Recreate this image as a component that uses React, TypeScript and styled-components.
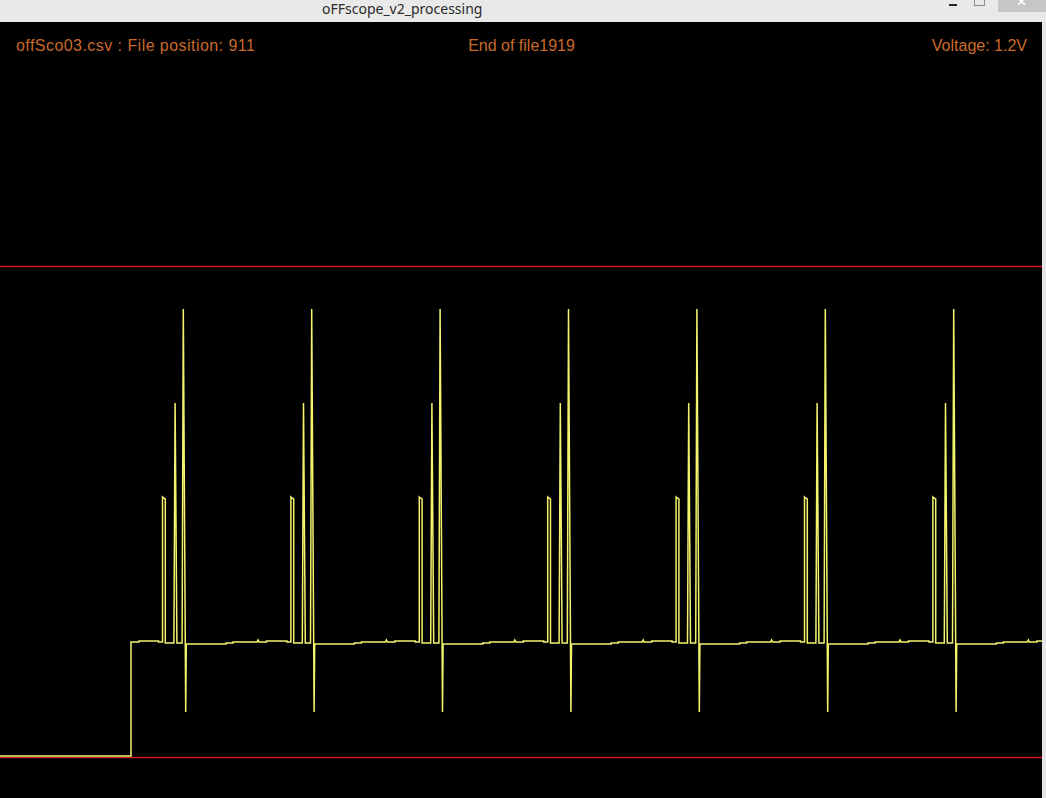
import { useMemo } from 'react';
import styled, { createGlobalStyle } from 'styled-components';

const PLOT_TOP = 70;
const PLOT_WIDTH = 1042;
const PLOT_HEIGHT = 728;
const PERIOD = 128.4;
const FIRST_PULSE = 162.5;
const PULSES = 7;

type Point = [number, number];

// one burst: small pulse, medium spike, tall spike with the undershoot, then the idle baseline
const burst = (s: number): Point[] => [
  [s - 4, 641],
  [s - 4, 642],
  [s, 642],
  [s, 497],
  [s + 1, 498],
  [s + 2.8, 499],
  [s + 2.8, 643],
  [s + 11.4, 643],
  [s + 12.6, 403],
  [s + 14.4, 643],
  [s + 19.6, 643],
  [s + 20.8, 309],
  [s + 23.2, 712],
  [s + 23.8, 644],
  [s + 63.5, 644],
  [s + 63.5, 643],
  [s + 70.5, 643],
  [s + 70.5, 642],
  [s + 94.5, 642],
  [s + 95.5, 640],
  [s + 96.5, 642],
  [s + 104, 642],
  [s + 104, 641],
];

const buildTrace = () => {
  const pts: Point[] = [
    [0, 756],
    [131, 756],
    [131, 642],
    [139, 642],
    [139, 641],
  ];
  for (let k = 0; k < PULSES; k++) {
    pts.push(...burst(FIRST_PULSE + k * PERIOD));
  }
  pts.push([1042, 641]);
  return pts.map(([x, y]) => `${x.toFixed(1)},${(y - PLOT_TOP).toFixed(1)}`).join(' ');
};

const App = () => {
  const trace = useMemo(buildTrace, []);

  return (
    <>
      <GlobalStyle />
      <Window>
        <TitleBar>
          <Title>oFFscope_v2_processing</Title>
          <Controls>
            <MinButton><span /></MinButton>
            <MaxButton><span /></MaxButton>
            <CloseButton>
              <svg width="10" height="7" viewBox="0 0 10 7">
                <path d="M1 -2 L8 5 M8 -2 L1 5" stroke="#fff" strokeWidth="1.6" />
              </svg>
            </CloseButton>
          </Controls>
        </TitleBar>
        <Body>
          <Canvas>
            <InfoBar>
              <InfoText align="start" spread={0.45}>offSco03.csv : File position: 911</InfoText>
              <InfoText align="center">End of file1919</InfoText>
              <InfoText align="end">Voltage: 1.2V</InfoText>
            </InfoBar>
            <Plot width={PLOT_WIDTH} height={PLOT_HEIGHT} viewBox={`0 0 ${PLOT_WIDTH} ${PLOT_HEIGHT}`}>
              <RedLine x1="0" x2={PLOT_WIDTH} y1={266.5 - PLOT_TOP} y2={266.5 - PLOT_TOP} />
              <RedLine x1="0" x2={PLOT_WIDTH} y1={757.5 - PLOT_TOP} y2={757.5 - PLOT_TOP} />
              <polyline points={trace} fill="none" stroke="#f4f46c" strokeWidth="1.5" strokeLinejoin="miter" />
            </Plot>
          </Canvas>
          <Frame />
        </Body>
      </Window>
    </>
  );
};

const GlobalStyle = createGlobalStyle`
  html, body {
    margin: 0;
    padding: 0;
    background: #000;
    overflow: hidden;
  }
`;

const Window = styled.div`
  width: 1046px;
  height: 798px;
  display: flex;
  flex-direction: column;
  background: #e9e9e9;
`;

const TitleBar = styled.div`
  height: 22px;
  display: flex;
  align-items: flex-start;
  background: #e9e9e9;
  overflow: hidden;
`;

const Title = styled.div`
  margin-left: 322px;
  padding-top: 1px;
  font-family: "Noto Sans", "DejaVu Sans", sans-serif;
  font-size: 14px;
  color: #2a2a2a;
  line-height: 15px;
`;

const Controls = styled.div`
  margin-left: auto;
  display: flex;
  align-items: flex-start;
  height: 12px;
`;

const MinButton = styled.div`
  width: 26px;
  display: flex;
  justify-content: center;
  & > span {
    margin-top: 4px;
    width: 8px;
    height: 2px;
    background: #262626;
  }
`;

const MaxButton = styled.div`
  width: 26px;
  margin-right: 6px;
  display: flex;
  justify-content: center;
  & > span {
    width: 9px;
    height: 5px;
    border: 1px solid #8c8c8c;
    border-top: none;
  }
`;

const CloseButton = styled.div`
  width: 48px;
  height: 12px;
  background: #c6c6c6;
  display: flex;
  justify-content: center;
  align-items: flex-start;
`;

const Body = styled.div`
  flex: 1;
  display: flex;
`;

const Canvas = styled.div`
  width: ${PLOT_WIDTH}px;
  background: #000;
  display: flex;
  flex-direction: column;
`;

const Frame = styled.div`
  flex: 1;
  background: #e6e6e6;
`;

const InfoBar = styled.div`
  height: 48px;
  box-sizing: border-box;
  padding: 15px 15px 0 16px;
  display: grid;
  grid-template-columns: 1fr auto 1fr;
  align-items: start;
`;

type InfoTextType = {
  align: 'start' | 'center' | 'end';
  spread?: number;
};

const InfoText = styled.span<InfoTextType>`
  justify-self: ${({ align }) => align};
  font-family: "Liberation Sans", Arial, sans-serif;
  font-size: 16px;
  line-height: 18px;
  letter-spacing: ${({ spread }) => spread ?? 0}px;
  color: #c96a2a;
  white-space: nowrap;
`;

const Plot = styled.svg`
  display: block;
  flex-shrink: 0;
`;

const RedLine = styled.line`
  stroke: #cc1820;
  stroke-width: 1.3;
`;

export default App;
